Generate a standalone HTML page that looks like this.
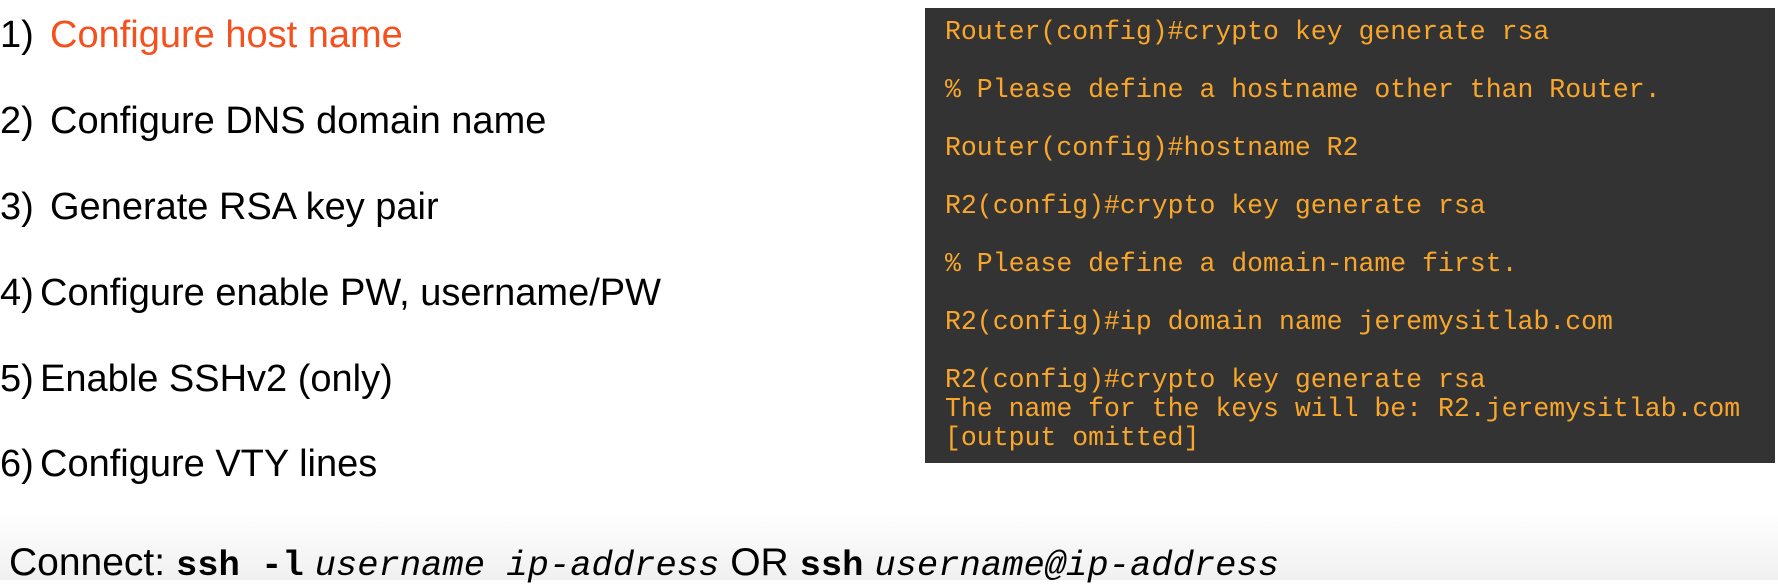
<!DOCTYPE html>
<html><head><style>
body{margin:0;width:1778px;height:580px;overflow:hidden;background:#fff;position:relative;font-family:"Liberation Sans",sans-serif}
.l{position:absolute;left:0;font-size:38px;color:#000;white-space:pre;line-height:1}
.l span.x{position:absolute;left:50px}
.l span.y{position:absolute;left:40px}
.o{color:#f4511e}
.box{position:absolute;left:925px;top:8px;width:850px;height:455px;background:#333}
.t{position:absolute;left:945px;font-family:"Liberation Mono",monospace;font-size:26.5px;color:#f9a62c;white-space:pre;line-height:1}
.bot{position:absolute;left:0;top:510px;width:1778px;height:70px;background:linear-gradient(#fff,#f0f0f0)}
.c{position:absolute;left:9px;top:543px;font-size:39px;white-space:pre;line-height:1}
.m{font-family:"Liberation Mono",monospace;font-size:35.5px}
</style></head><body>
<div class="l" style="top:16px">1)<span class="x o">Configure host name</span></div>
<div class="l" style="top:102px">2)<span class="x">Configure DNS domain name</span></div>
<div class="l" style="top:188px">3)<span class="x">Generate RSA key pair</span></div>
<div class="l" style="top:274px">4)<span class="y">Configure enable PW, username/PW</span></div>
<div class="l" style="top:360px">5)<span class="y">Enable SSHv2 (only)</span></div>
<div class="l" style="top:445px">6)<span class="y">Configure VTY lines</span></div>
<div class="box"></div>
<div class="t" style="top:19px">Router(config)#crypto key generate rsa</div>
<div class="t" style="top:77px">% Please define a hostname other than Router.</div>
<div class="t" style="top:135px">Router(config)#hostname R2</div>
<div class="t" style="top:193px">R2(config)#crypto key generate rsa</div>
<div class="t" style="top:251px">% Please define a domain-name first.</div>
<div class="t" style="top:309px">R2(config)#ip domain name jeremysitlab.com</div>
<div class="t" style="top:367px">R2(config)#crypto key generate rsa</div>
<div class="t" style="top:396px">The name for the keys will be: R2.jeremysitlab.com</div>
<div class="t" style="top:425px">[output omitted]</div>
<div class="bot"></div>
<div class="c">Connect: <b class="m">ssh -l</b> <i class="m">username ip-address</i> OR <b class="m">ssh</b> <i class="m">username@ip-address</i></div>
</body></html>
